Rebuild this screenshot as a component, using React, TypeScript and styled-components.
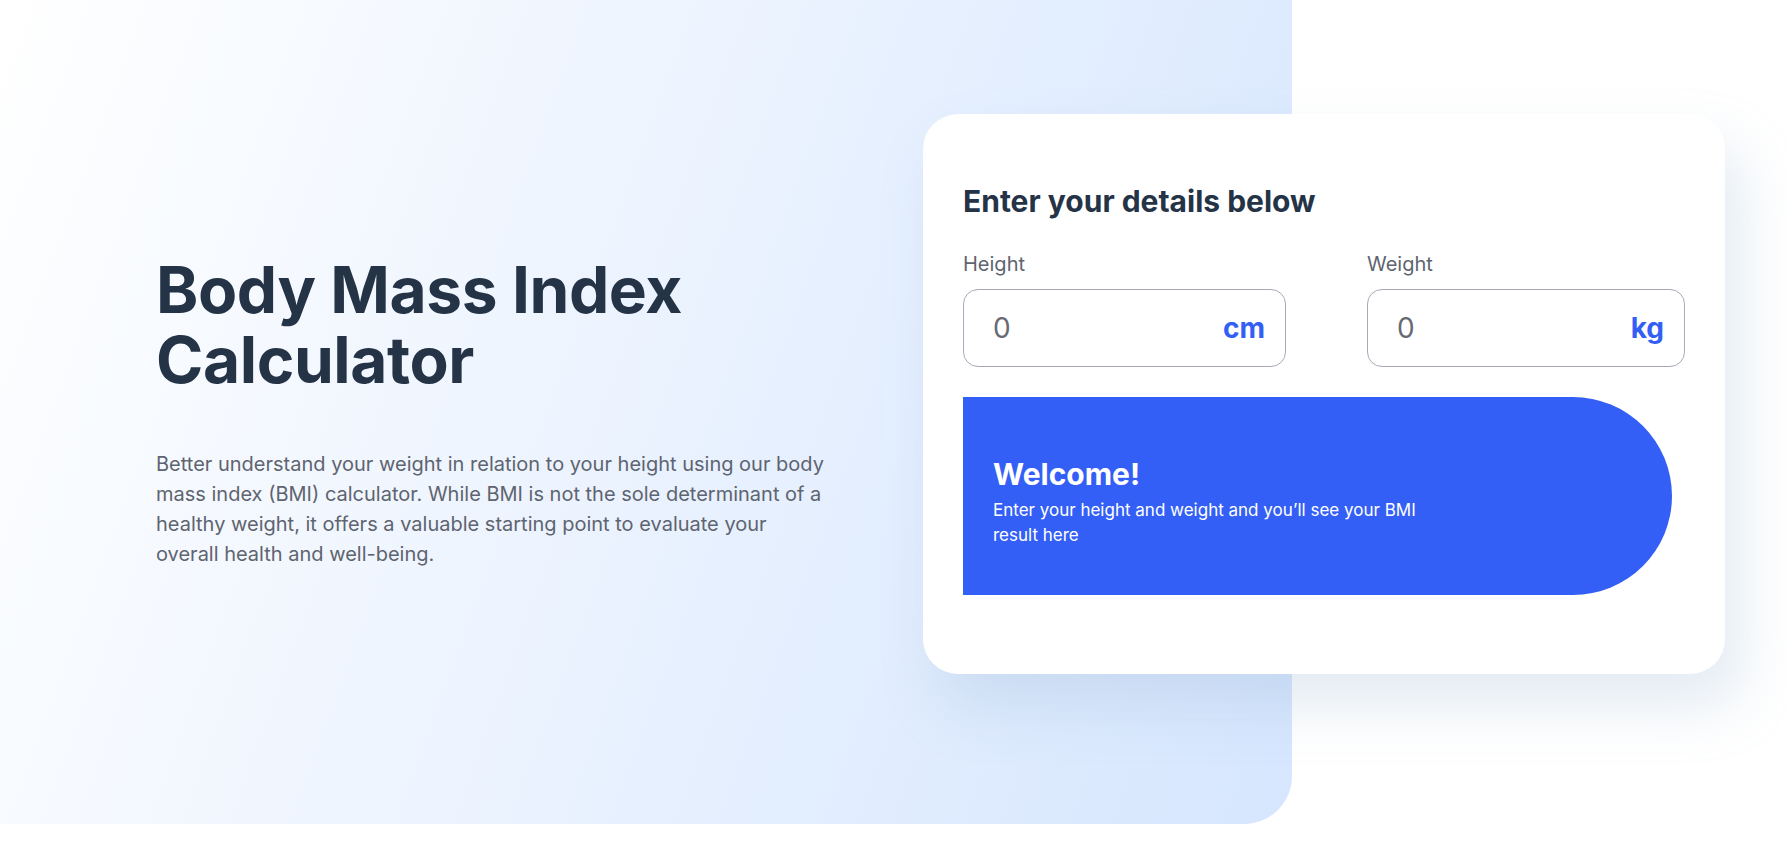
import { createGlobalStyle, styled } from "styled-components";

const GlobalStyle = createGlobalStyle`
    body {
        margin: 0;
        background: #ffffff;
        font-family: Inter, "Noto Sans", sans-serif;
    }
`;

const Hero = styled.section`
    position: relative;
    min-height: 824px;
    box-sizing: border-box;
    padding: 0 63px 0 156px;

    display: flex;
    justify-content: space-between;
    align-items: flex-start;

    &::before {
        content: "";
        position: absolute;
        top: 0;
        left: 0;
        width: 1292px;
        height: 100%;
        border-bottom-right-radius: 48px;
        background: linear-gradient(290deg, #d6e6fe 0%, rgba(214, 230, 254, 0) 100%);
    }
`;

const Intro = styled.div`
    position: relative;
    align-self: center;
    width: 672px;
`;

const Title = styled.h1`
    margin: 0;
    font-size: 64px;
    font-weight: 700;
    line-height: 1.1;
    letter-spacing: -0.4px;
    color: #253347;
`;

const Lead = styled.p`
    margin: 54px 0 0;
    font-size: 20px;
    line-height: 30px;
    color: #5e6470;
`;

const Card = styled.form`
    position: relative;
    width: 802px;
    height: 560px;
    margin-top: 114px;
    padding: 69px 40px 0;
    box-sizing: border-box;

    background: #ffffff;
    border-radius: 35px;
    box-shadow: 16px 32px 56px rgba(143, 174, 207, 0.25);
`;

const CardTitle = styled.h2`
    margin: 0;
    font-size: 30px;
    font-weight: 700;
    line-height: 1.2;
    color: #253347;
`;

const Fields = styled.div`
    display: grid;
    grid-template-columns: 323px 318px;
    column-gap: 81px;
    margin-top: 30px;
`;

const Field = styled.label`
    display: flex;
    flex-direction: column;
    gap: 10px;
`;

const FieldLabel = styled.span`
    font-size: 20px;
    line-height: 30px;
    color: #5e6470;
`;

const InputBox = styled.div`
    height: 78px;
    box-sizing: border-box;
    padding: 0 20px 0 29px;
    border: 1px solid #a7aab8;
    border-radius: 15px;

    display: flex;
    align-items: center;
    justify-content: space-between;
`;

const NumberInput = styled.input`
    width: 100%;
    min-width: 0;
    padding: 0;
    border: none;
    outline: none;
    background: transparent;
    font-family: inherit;
    font-size: 28px;
    color: #253347;

    &::placeholder {
        color: #676a72;
    }
`;

const Unit = styled.span`
    font-size: 28px;
    font-weight: 700;
    color: #345ff6;
`;

const Result = styled.div`
    width: 709px;
    height: 198px;
    margin-top: 30px;
    padding: 59px 32px 0 30px;
    box-sizing: border-box;

    background: #345ff6;
    border-radius: 0 999px 999px 0;
    color: #ffffff;
`;

const ResultTitle = styled.h3`
    margin: 0;
    font-size: 30px;
    font-weight: 700;
    line-height: 1.2;
`;

const ResultText = styled.p`
    margin: 6px 0 0;
    max-width: 450px;
    font-size: 17px;
    line-height: 25px;
`;

const fields = [
    { label: "Height", unit: "cm" },
    { label: "Weight", unit: "kg" },
];

export default function App() {
    return (
        <>
            <GlobalStyle />
            <Hero>
                <Intro>
                    <Title>
                        Body Mass Index
                        <br />
                        Calculator
                    </Title>
                    <Lead>
                        Better understand your weight in relation to your height using our body mass index (BMI)
                        calculator. While BMI is not the sole determinant of a healthy weight, it offers a valuable
                        starting point to evaluate your overall health and well-being.
                    </Lead>
                </Intro>
                <Card onSubmit={(e) => e.preventDefault()}>
                    <CardTitle>Enter your details below</CardTitle>
                    <Fields>
                        {fields.map((f) => (
                            <Field key={f.label}>
                                <FieldLabel>{f.label}</FieldLabel>
                                <InputBox>
                                    <NumberInput type="number" placeholder="0" />
                                    <Unit>{f.unit}</Unit>
                                </InputBox>
                            </Field>
                        ))}
                    </Fields>
                    <Result>
                        <ResultTitle>Welcome!</ResultTitle>
                        <ResultText>
                            Enter your height and weight and you’ll see your BMI result here
                        </ResultText>
                    </Result>
                </Card>
            </Hero>
        </>
    );
}
